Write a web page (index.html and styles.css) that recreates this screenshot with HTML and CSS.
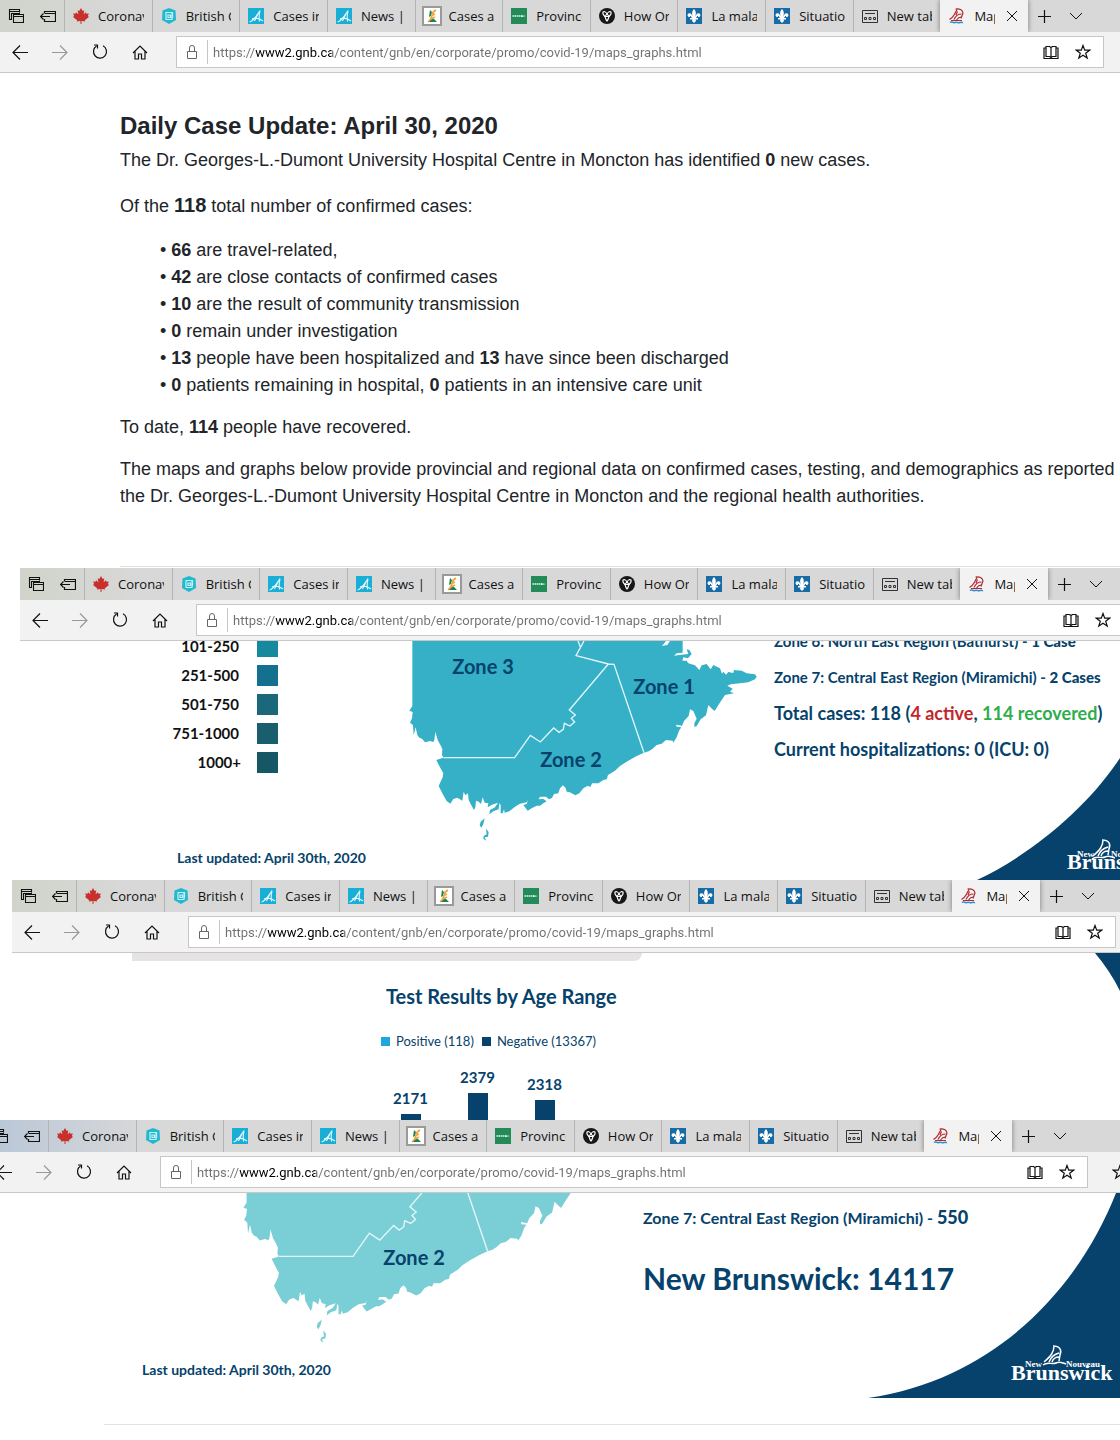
FILE: index.html
```html
<!DOCTYPE html>
<html lang="en">
<head>
<meta charset="utf-8">
<title>Daily Case Update: April 30, 2020</title>
<link rel="stylesheet" href="styles.css">
</head>
<body>
<svg class="sprite" aria-hidden="true">
  <symbol id="i-tabs" viewBox="0 0 16 16"><g fill="none" stroke="currentColor" stroke-width="1.100"><path d="M3.500 11.500H1.500V1.500H11.500V4.500M1.500 3.500H11.500M3.500 12V5.500H12M5.500 6.500H15.500V14.500H5.500zM5.500 8.500H15.500"/></g></symbol>
  <symbol id="i-aside" viewBox="0 0 16 16"><g fill="none" stroke="currentColor" stroke-width="1.200"><path d="M4.500 5V3.500H15.500V13.500H4.500V11M4.500 5.500H15.500M10 8.500H.500M3.500 5.500L.500 8.500L3.500 11.500"/></g></symbol>
  <symbol id="i-leaf" viewBox="0 0 16 16"><path fill="#c8302e" d="M8 0l1.700 3 1.600-.8-.7 4L13 4.300l.4 1.500 2.500-.4-1 2.500L16 9l-4.200 3.300.4 1.200-3.700-.5V16h-1v-3l-3.700.5.4-1.200L0 9l1.100-1.100-1-2.500 2.500.4.400-1.500 2.400 1.900-.7-4 1.600.8z"/></symbol>
  <symbol id="i-hex" viewBox="0 0 16 16"><path fill="#22b8ce" d="M8 0l6.500 2.500L15 12 8 16 1 12l.5-9.500z"/><path fill="none" stroke="#c5f3f7" stroke-width="1.200" d="M5 11V4.500h6.500V10M11 5v6.500H4.500M7 7h2.500v2.500H7z"/></symbol>
  <symbol id="i-a" viewBox="0 0 16 16"><path fill="#19aed6" d="M0 0h16v16H0z"/><path fill="none" stroke="#dff6fc" stroke-width="1.100" d="M1.500 14C6 13 9 7 12 2.500c-1 4-1 8-.5 11M4 11c3-1.500 7-1 11 2M10 6l-3.500 7"/></symbol>
  <symbol id="i-sask" viewBox="0 0 20 20"><path fill="#fff" stroke="#999" stroke-width="2" d="M1 1h18v18H1z"/><path fill="#16805a" d="M8 4l2 2-1 4-2 1zM11 12l4 4H7v-1z"/><path fill="none" stroke="#eea93a" stroke-width="1.600" d="M6 16c5-4 3-7 7-12M9 10l4-2M10 7l4-3M9 13l4-2"/></symbol>
  <symbol id="i-pei" viewBox="0 0 16 16"><path fill="#228b57" d="M0 0h16v16H0z"/><path fill="none" stroke="#e7f5ee" stroke-width="1.300" d="M1.500 8h9" stroke-dasharray="1.500 .5"/><path fill="#fff" d="M10 7.300l5 .7-5 1z"/></symbol>
  <symbol id="i-ont" viewBox="0 0 16 16"><circle cx="8" cy="8" r="8" fill="#171717"/><path fill="none" stroke="#fff" stroke-width="1.100" d="M4 4c1.500-1 3 0 4 2 1-2 2.500-3 4-2 .5 2-.5 3.500-2 4.500-.5 2-1 3.500-2 4.500-1-1-1.500-2.500-2-4.500C4.500 7.500 3.500 6 4 4zM6 8.500L8 6l2 2.500z"/></symbol>
  <symbol id="i-lys" viewBox="0 0 16 16"><path fill="#176ca6" d="M0 0h16v16H0z"/><path fill="#fff" d="M8 1c2.500 3 2 4.500 1.200 8C10 5.500 12 4.500 13.500 5.500 15.500 7 14 9.500 12 9c.5-1.500-1-1.500-1.800 1H12v1.500H9.500L10 13l-2 2-2-2 .5-1.500H4V10h1.800C5 7.500 3.500 7.500 4 9 2 9.500.5 7 2.500 5.500 4 4.500 6 5.500 6.800 9 6 5.500 5.500 4 8 1z"/></symbol>
  <symbol id="i-new" viewBox="0 0 16 16"><g fill="none" stroke="#333"><path d="M.500 2.500h15v12H.500zM3 5.500h10"/><path d="M2.500 9.500h2v2h-2zM7 9.500h2v2H7zM11.500 9.500h2v2h-2z"/></g></symbol>
  <symbol id="i-nb" viewBox="0 0 16 16"><path fill="none" stroke="#b3292f" stroke-width="1.200" d="M6.500 1c4-.8 7 1 7.500 4l-2 5.500M8 1.500L5 7c-1 2-3 3.500-4.500 4.500M12.500 6c-3 0-6 2-7.500 5.500M12 9c-2 0-3 1-4.500 3M2 12.500h11M8.500 3.500L7 7"/><path fill="none" stroke="#2b91cf" stroke-width="1.500" d="M1 14.500c2-1.500 3 .8 5 0s3 .8 5 0 2 .5 3 0"/></symbol>
  <symbol id="i-close" viewBox="0 0 16 16"><path fill="none" stroke="currentColor" d="M3 3l10 10M13 3L3 13"/></symbol>
  <symbol id="i-plus" viewBox="0 0 16 16"><path fill="none" stroke="currentColor" stroke-width="1.200" d="M8.500 2v13M2 8.500h13"/></symbol>
  <symbol id="i-down" viewBox="0 0 16 16"><path fill="none" stroke="currentColor" d="M2 5l6 6 6-6"/></symbol>
  <symbol id="i-back" viewBox="0 0 16 16"><path fill="none" stroke="currentColor" stroke-width="1.200" d="M16 8.500H1M8 1.500l-7 7 7 7"/></symbol>
  <symbol id="i-fwd" viewBox="0 0 16 16"><path fill="none" stroke="currentColor" stroke-width="1.200" d="M0 8.500h15M8 1.500l7 7-7 7"/></symbol>
  <symbol id="i-reload" viewBox="0 0 16 16"><path fill="none" stroke="currentColor" stroke-width="1.200" d="M11 1.800a6.500 6.500 0 1 1-6.500.3M2 1h3.500v3.500"/></symbol>
  <symbol id="i-home" viewBox="0 0 16 16"><path fill="none" stroke="currentColor" stroke-width="1.200" d="M1 9l7-7 7 7M3 7.500V15h3.500v-5h3v5H13V7.500"/></symbol>
  <symbol id="i-lock" viewBox="0 0 16 16"><path fill="none" stroke="currentColor" d="M3.500 7.500h9v7h-9zM5.500 7V4a2.500 2.500 0 0 1 5 0v3"/></symbol>
  <symbol id="i-book" viewBox="0 0 16 16"><path fill="none" stroke="currentColor" stroke-width="1.200" d="M3 2.500h3.500L8 3.500l1.500-1H13v10H9.500L8 13.500l-1.500-1H3zM8 3v11M3 4H1v10.500h14V4h-2"/></symbol>
  <symbol id="i-star" viewBox="0 0 16 16"><path fill="none" stroke="currentColor" stroke-width="1.200" d="M8 1.500l1.700 4.700h4.900l-3.900 3 1.500 4.900L8 11.200l-4.200 2.900 1.500-4.900-3.900-3h4.900z"/></symbol>
  <symbol id="nb-map" viewBox="78 3 1080 717" overflow="visible">
    <path fill="currentColor" d="M97 3V198L88 212 98 216 96 235 90 248 99 255 101 286 107 262 112 285 118 293 126 296 135 307 150 303 160 306 163 300 166 275 173 300 183 318 187 328 186 345 190 353 169 360 178 378 190 400 188 412 176 438 188 462 200 483 211 491 220 477 232 473 247 482 251 455 256 466 264 460 266 480 274 496 282 510 286 502 288 482 296 485 303 492 308 472 314 488 325 490 323 502 336 494 354 488 345 502 330 510 328 523 340 514 356 508 358 490 362 495 362 520 368 520 372 508 374 518 388 514 405 500 420 491 440 487 444 480 440 492 430 495 443 512 455 505 470 497 480 497 490 490 500 484 490 477 476 478 480 470 498 470 507 478 516 474 522 462 535 460 540 445 549 436 557 444 560 455 568 456 586 466 598 460 610 445 622 438 632 440 636 430 655 430 670 420 680 418 684 405 705 392 720 378 745 362 770 348 792 338 806 334 818 326 830 315 845 311 858 300 878 302 880 308 890 292 897 272 904 262 890 260 888 254 906 257 912 243 926 228 930 208 940 213 950 236 943 250 943 261 950 258 962 238 978 226 985 195 994 205 1004 213 1015 195 1035 165 1062 160 1050 155 1058 146 1042 137 1052 133 1080 130 1105 127 1125 118 1130 110 1125 103 1100 100 1085 92 1062 90 1060 99 1045 96 1038 104 1030 95 1026 101 1020 85 1000 75 992 88 980 72 965 76 958 90 945 76 925 70 920 62 907 62 910 52 924 55 935 42 928 30 920 28 925 42 905 44 882 47 890 40 908 38V3H870L862 15 846 18 858 3z"/>
    <path fill="currentColor" d="M314 535L302 545 299 556 304 563 310 552zM318 566L326 576 324 590 314 592 319 602 310 596 311 588 320 583z"/>
    <path fill="none" stroke="#e3f7fa" stroke-width="4" d="M594 3L602 23M612 3L588 47 685 72 702 73 792 338M685 72L568 210 586 225 574 235 584 246 570 258 553 250 550 268 537 277 521 264 481 306 451 286 404 353H190"/>
  </symbol>
  <symbol id="sail" viewBox="0 0 28 24"><path fill="none" stroke="#fff" stroke-width="1.500" d="M12 1c7 0 9 4 7 9l-1 6M13 1c0 6-3 10-10 16M18 8c-4 1-8 4-10 9M18 12c-3 0-6 2-7 5M2 20c5-4 9 0 13-2s6 0 10 1"/></symbol>
</svg>

<template id="browser-chrome">
  <header class="chrome">
    <div class="tabbar">
      <div class="tab-tools">
        <button aria-label="Tabs you've set aside"><svg><use href="#i-tabs"/></svg></button>
        <button aria-label="Set these tabs aside"><svg><use href="#i-aside"/></svg></button>
      </div>
      <nav class="tabs" aria-label="Open tabs">
        <button class="tab"><svg><use href="#i-leaf"/></svg><span>Coronav</span></button>
        <button class="tab"><svg><use href="#i-hex"/></svg><span>British C</span></button>
        <button class="tab"><svg><use href="#i-a"/></svg><span>Cases in</span></button>
        <button class="tab"><svg><use href="#i-a"/></svg><span>News | A</span></button>
        <button class="tab"><svg class="framed"><use href="#i-sask"/></svg><span>Cases ar</span></button>
        <button class="tab"><svg><use href="#i-pei"/></svg><span>Province</span></button>
        <button class="tab"><svg><use href="#i-ont"/></svg><span>How Or</span></button>
        <button class="tab"><svg><use href="#i-lys"/></svg><span>La mala</span></button>
        <button class="tab"><svg><use href="#i-lys"/></svg><span>Situatio</span></button>
        <button class="tab"><svg><use href="#i-new"/></svg><span>New tab</span></button>
        <button class="tab active"><svg><use href="#i-nb"/></svg><span>Map</span><svg class="close"><use href="#i-close"/></svg></button>
      </nav>
      <div class="tab-actions">
        <button aria-label="New tab"><svg><use href="#i-plus"/></svg></button>
        <button aria-label="Tab previews"><svg><use href="#i-down"/></svg></button>
      </div>
    </div>
    <div class="toolbar">
      <div class="nav-buttons">
        <button aria-label="Back"><svg><use href="#i-back"/></svg></button>
        <button aria-label="Forward" class="dim"><svg><use href="#i-fwd"/></svg></button>
        <button aria-label="Refresh"><svg><use href="#i-reload"/></svg></button>
        <button aria-label="Home"><svg><use href="#i-home"/></svg></button>
      </div>
      <div class="address">
        <svg class="lock"><use href="#i-lock"/></svg>
        <input type="text" aria-label="Address" value="https://www2.gnb.ca/content/gnb/en/corporate/promo/covid-19/maps_graphs.html">
        <button aria-label="Reading view"><svg><use href="#i-book"/></svg></button>
        <button aria-label="Add to favorites"><svg><use href="#i-star"/></svg></button>
      </div>
      <button class="favorites" aria-label="Favorites"><svg><use href="#i-star"/></svg></button>
    </div>
  </header>
</template>

<main class="page">
  <section class="shot">
    <div class="window" data-chrome>
      <article class="update">
        <h1>Daily Case Update: April 30, 2020</h1>
        <p>The Dr. Georges-L.-Dumont University Hospital Centre in Moncton has identified <b>0</b> new cases.</p>
        <p class="total">Of the <b>118</b> total number of confirmed cases:</p>
        <ul>
          <li><b>66</b> are travel-related,</li>
          <li><b>42</b> are close contacts of confirmed cases</li>
          <li><b>10</b> are the result of community transmission</li>
          <li><b>0</b> remain under investigation</li>
          <li><b>13</b> people have been hospitalized and <b>13</b> have since been discharged</li>
          <li><b>0</b> patients remaining in hospital, <b>0</b> patients in an intensive care unit</li>
        </ul>
        <p class="spaced">To date, <b>114</b> people have recovered.</p>
        <p class="spaced">The maps and graphs below provide provincial and regional data on confirmed cases, testing, and demographics as reported by the Dr. Georges-L.-Dumont University Hospital Centre in Moncton and the regional health authorities.</p>
        <hr>
      </article>
    </div>
  </section>

  <section class="shot cases-shot">
    <div class="window" data-chrome>
      <div class="cases">
        <div class="key-column">
          <ul class="scale">
            <li>101-250<i class="s1"></i></li>
            <li>251-500<i class="s2"></i></li>
            <li>501-750<i class="s3"></i></li>
            <li>751-1000<i class="s4"></i></li>
            <li class="last">1000+<i class="s5"></i></li>
          </ul>
          <p class="updated">Last updated: April 30th, 2020</p>
        </div>
        <svg class="map" viewBox="0 0 360 239">
          <use href="#nb-map" width="360" height="239"/>
          <text x="77" y="33" text-anchor="middle">Zone 3</text>
          <text x="258" y="53" text-anchor="middle">Zone 1</text>
          <text x="165" y="126" text-anchor="middle">Zone 2</text>
        </svg>
        <div class="facts">
          <p>Zone 6: North East Region (Bathurst) - <b>1 Case</b></p>
          <p>Zone 7: Central East Region (Miramichi) - <b>2 Cases</b></p>
          <p class="sum">Total cases: 118 (<span class="active-cases">4 active</span>, <span class="recovered">114 recovered</span>)</p>
          <p class="sum">Current hospitalizations: 0 (ICU: 0)</p>
        </div>
      </div>
    </div>
    <svg class="swoosh" viewBox="0 0 143 122"><path fill="#06426b" d="M143 0C110 50 55 96 0 122H143z"/>
      <use href="#sail" x="113" y="81" width="28" height="24"/>
      <text class="logo-small" x="100" y="99">New</text><text class="logo-small" x="134" y="99">Nouveau</text>
      <text class="logo" x="90" y="111">Brunswick</text>
    </svg>
  </section>

  <section class="shot chart-shot">
    <div class="window" data-chrome>
      <div class="results">
        <div class="band"></div>
        <div class="chart">
          <h2>Test Results by Age Range</h2>
          <ul class="series">
            <li class="positive">Positive (118)</li>
            <li class="negative">Negative (13367)</li>
          </ul>
          <div class="bars">
            <div>2171<i style="height:6px"></i></div>
            <div>2379<i style="height:27px"></i></div>
            <div>2318<i style="height:20px"></i></div>
          </div>
        </div>
      </div>
    </div>
    <svg class="swoosh edge" viewBox="0 0 25 38"><path fill="#06426b" d="M0 0C10 12 18 24 25 38V0z"/></svg>
  </section>

  <section class="shot tests-shot">
    <div class="window" data-chrome>
      <div class="tests">
        <div class="map-column">
          <svg class="map light" viewBox="0 0 360 165">
            <svg width="360" height="170" viewBox="0 55.700 346 163.400"><use href="#nb-map" width="360" height="239"/></svg>
            <text x="174" y="72" text-anchor="middle">Zone 2</text>
          </svg>
          <p class="updated">Last updated: April 30th, 2020</p>
        </div>
        <div class="facts">
          <p>Zone 7: Central East Region (Miramichi) - <b>550</b></p>
          <p class="headline">New Brunswick: 14117</p>
        </div>
      </div>
      <hr>
    </div>
    <svg class="swoosh tall" viewBox="0 0 252 205"><path fill="#06426b" d="M248 0C212 92 130 186 0 205H252V0z"/>
      <use href="#sail" x="173" y="152" width="28" height="24"/>
      <text class="logo-small" x="157" y="174">New</text><text class="logo-small" x="198" y="174">Nouveau</text>
      <text class="logo" x="143" y="187">Brunswick</text>
    </svg>
  </section>
</main>
<script src="script.js"></script>
</body>
</html>
```
FILE: styles.css
```css
* { box-sizing: border-box; }
body { margin: 0; background: #fff; color: #212529; font: 18px/27px "Liberation Sans", Arial, sans-serif; }
.sprite { display: none; }
h1, h2, p, ul { margin: 0; padding: 0; }
ul { list-style: none; }
button { border: 0; padding: 0; background: none; color: inherit; font: inherit; display: flex; align-items: center; justify-content: center; }
hr { border: 0; border-top: 1px solid #e2e2e2; margin: 0; }

/* Stacked browser windows, each clipped by the page edge */
.page { overflow: hidden; }
.shot { position: relative; overflow: hidden; }
.window { width: calc(100% + 48px); }
.cases-shot .window { margin-left: 20px; }
.chart-shot .window { margin-left: 12px; }
.tests-shot .window { margin-left: -16px; }

/* Browser chrome */
.chrome { font: 13px/20px "Open Sans", "Noto Sans", sans-serif; color: #111; }
.chrome svg { width: 16px; height: 16px; flex: none; display: block; }
.tabbar { display: flex; height: 32px; background: linear-gradient(90deg, #d0d4ca, #d8d8d8 120px); }
.tests-shot .tabbar { background: linear-gradient(90deg, #b7c6d8, #d8d8d8 160px); }
.tab-tools { flex: 0 0 64px; display: flex; gap: 16px; padding-left: 8px; }
.tabs { flex: 0 0 964px; min-width: 0; display: flex; }
.tab { flex: 1 1 0; min-width: 0; justify-content: flex-start; gap: 9px; padding: 0 8px; border-left: 1px solid #b4b4b4; }
.tab span { flex: 1 1 0; min-width: 0; overflow: hidden; white-space: nowrap; text-align: left; }
.chrome .framed { width: 20px; height: 20px; margin: 0 -2px; }
.tab.active { background: #f2f2f2; border-color: #f2f2f2; box-shadow: 0 0 5px #777; clip-path: inset(0 -6px); }
.tab-actions { display: flex; padding-left: 8px; gap: 16px; }
.toolbar { display: flex; align-items: center; height: 41px; background: #f2f2f2; border-bottom: 1px solid #c8c8c8; }
.nav-buttons { flex: 0 0 176px; display: flex; gap: 24px; padding-left: 12px; }
.dim { color: #999; }
.address { flex: 1; display: flex; align-items: center; height: 32px; border: 1px solid #c6c6c6; background: #fff; padding-right: 12px; gap: 16px; }
.address .lock { margin-left: 7px; margin-right: -9px; color: #666; }
.address input { flex: 1; min-width: 0; height: 24px; border: 0; border-left: 1px solid #c6c6c6; padding: 0 0 0 5px; font: 13px/20px Roboto, sans-serif; color: #707070; background: linear-gradient(90deg, #707070 47px, #000 47px, #000 123px, #707070 123px); background-clip: text; -webkit-text-fill-color: transparent; outline: 0; }
.favorites { flex: 0 0 64px; }

/* Article */
.update { padding: 37px 24px 1px 120px; }
.update h1 { font-size: 24px; line-height: 32px; margin-bottom: 5px; }
.update .total { margin: 18px 0 17px; }
.total b { font-size: 20px; }
.update ul { padding-left: 40px; }
.update li::before { content: "•"; margin-right: 5px; }
.spaced { margin-top: 15px; }
.update hr { margin-top: 56px; }

/* Infographics */
.cases, .results, .tests { color: #06426b; font-family: Lato, "Open Sans", sans-serif; font-weight: bold; }
.cases { display: flex; height: 239px; overflow: hidden; }
.key-column { flex: 0 0 231px; min-width: 0; margin-left: 155px; white-space: nowrap; }
.scale { margin-top: -9px; width: 103px; color: #111; font-size: 15px; line-height: 29px; }
.scale li { display: flex; justify-content: flex-end; align-items: center; gap: 18px; }
.scale .last { gap: 16px; }
.scale i { flex: none; width: 21px; height: 21px; }
.s1 { background: #158a9f; }
.s2 { background: #14708f; }
.s3 { background: #1b687a; }
.s4 { background: #195e6c; }
.s5 { background: #165766; }
.updated { font-size: 14px; line-height: 24px; white-space: nowrap; }
.cases .updated { margin: 69px 0 0 2px; }
.map { flex: none; display: block; width: 360px; height: 239px; color: #35b0c6; overflow: hidden; }
.map.light { height: 165px; color: #7aced5; }
.map text { fill: #06426b; font-size: 20px; }
.facts { white-space: nowrap; font-size: 15px; line-height: 36px; padding-left: 8px; }
.cases .facts { margin-top: -18px; }
.facts .sum { font-size: 18px; }
.active-cases { color: #c1272d; }
.recovered { color: #2fad4c; }
.swoosh { position: absolute; right: 0; bottom: 0; width: 143px; height: 122px; }
.swoosh.edge { width: 25px; height: 38px; top: 73px; }
.swoosh.tall { width: 252px; height: 205px; top: 73px; }
.logo { fill: #fff; font: bold 22px "Liberation Serif", serif; }
.logo-small { fill: #fff; font: bold 9px "Liberation Serif", serif; }

.results { height: 167px; padding-left: 120px; }
.band { width: 510px; height: 8px; background: #e5e3e4; border-bottom-right-radius: 12px; }
.chart { width: 234px; margin-left: 249px; }
.chart h2 { font-size: 20px; line-height: 32px; padding: 19px 0 0 5px; white-space: nowrap; }
.series { display: flex; gap: 8px; margin-top: 16px; font-size: 13px; font-weight: normal; line-height: 26px; white-space: nowrap; }
.series li { display: flex; align-items: center; gap: 6px; }
.series li::before { content: ""; width: 9px; height: 9px; background: #1ea7dc; }
.series .negative::before { background: #06426b; }
.bars { display: grid; grid-template-columns: repeat(3, 67px); align-items: end; height: 66px; margin-left: -4px; font-size: 15px; line-height: 32px; text-align: center; }
.bars i { display: block; width: 20px; margin: 0 auto; background: #06426b; }

.tests { display: flex; height: 231px; }
.map-column { flex: 0 0 410px; margin-left: 256px; }
.tests .updated { margin-left: -98px; }
.tests .facts { padding: 6px 0 0; margin-left: -7px; font-size: 16px; }
.tests b { font-size: 18px; }
.facts .headline { font-size: 30px; line-height: 48px; margin-top: 18px; }
.tests-shot hr { margin: 0 0 15px 120px; }
```
FILE: script.js
```js
// Put the shared browser chrome at the top of every window.
const chrome = document.getElementById("browser-chrome");
document.querySelectorAll("[data-chrome]").forEach((win) => {
  win.prepend(chrome.content.cloneNode(true));
});
```
